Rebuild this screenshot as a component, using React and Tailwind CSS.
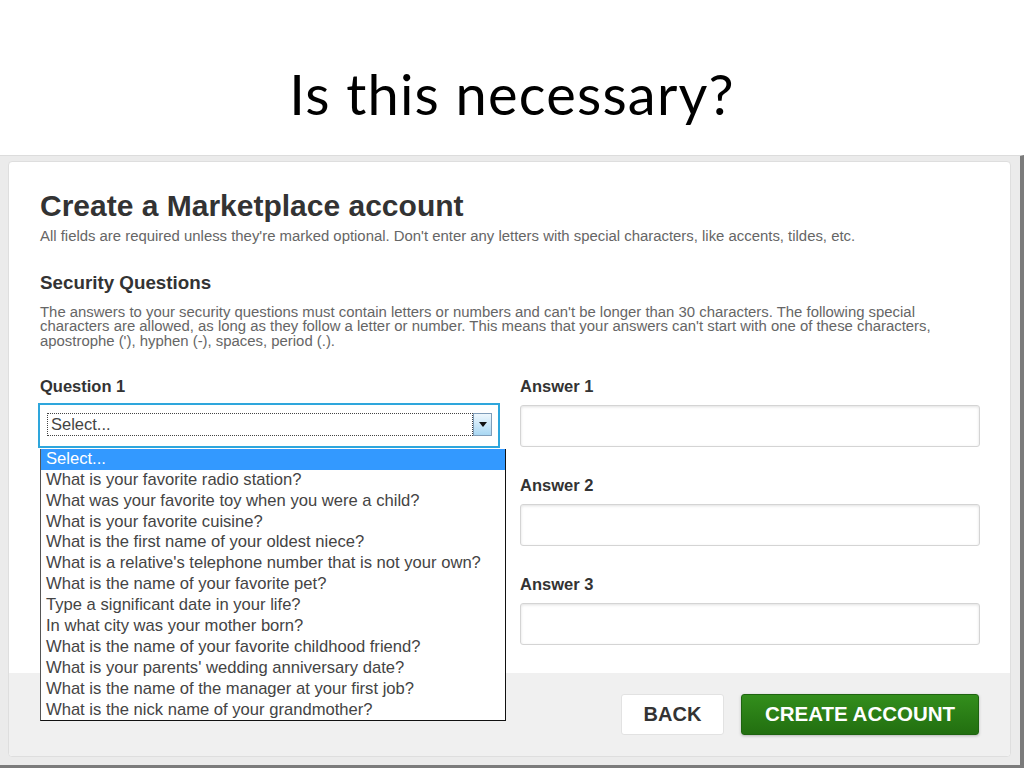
import React from "react";

const questions = [
  "Select...",
  "What is your favorite radio station?",
  "What was your favorite toy when you were a child?",
  "What is your favorite cuisine?",
  "What is the first name of your oldest niece?",
  "What is a relative's telephone number that is not your own?",
  "What is the name of your favorite pet?",
  "Type a significant date in your life?",
  "In what city was your mother born?",
  "What is the name of your favorite childhood friend?",
  "What is your parents' wedding anniversary date?",
  "What is the name of the manager at your first job?",
  "What is the nick name of your grandmother?",
];

function Label({ children }) {
  return (
    <div className="h-[20px] leading-[20px] text-[16.5px] font-bold text-[#333] mb-[9px]">
      {children}
    </div>
  );
}

function TextInput() {
  return (
    <div className="h-[42px] bg-white border border-[#d4d4d4] rounded-[3px] shadow-[inset_0_1px_3px_rgba(0,0,0,0.12)]" />
  );
}

function HiddenField() {
  return (
    <div className="mt-[28px]">
      <div className="h-[20px] mb-[9px]" />
      <div className="h-[42px] bg-white border border-[#d4d4d4] rounded-[3px]" />
    </div>
  );
}

function OpenSelect() {
  return (
    <div className="relative -mt-[2px]">
      <div className="-ml-[2px] w-[462px] h-[45px] border-2 border-[#2ea6dc] bg-white flex pl-[7px] pr-[6px] pt-[8px]">
        <div className="flex-1 h-[23px] border border-dotted border-[#444] flex items-center pl-[3px] text-[16.5px] text-[#444]">
          Select...
        </div>
        <div className="w-[19px] h-[23px] border border-[#7f9db9] bg-gradient-to-b from-[#eef7fd] to-[#a9d8f3] flex items-center justify-center">
          <svg width="8" height="5" viewBox="0 0 8 5">
            <path d="M0 0 L8 0 L4 5 Z" fill="#111" />
          </svg>
        </div>
      </div>
      <div className="absolute left-0 top-[46px] w-[466px] bg-white border border-t-0 border-l-[#555] border-r-[#111] border-b-[#111] z-10">
        {questions.map((q, i) => (
          <div
            key={q}
            className={
              i === 0
                ? "h-[20.9px] leading-[20.9px] pl-[5px] text-[16.6px] whitespace-nowrap bg-[#3399ff] text-white"
                : "h-[20.9px] leading-[20.9px] pl-[5px] text-[16.6px] whitespace-nowrap text-[#444]"
            }
          >
            {q}
          </div>
        ))}
      </div>
    </div>
  );
}

export default function App() {
  return (
    <div className="w-[1024px] h-[768px] bg-white overflow-hidden flex flex-col">
      <div
        className="h-[155px] shrink-0 pt-[61px] text-center text-[56px] leading-[66px] tracking-[1.2px] text-black"
        style={{ fontFamily: "Lato, 'Open Sans', sans-serif" }}
      >
        Is this necessary?
      </div>
      <div
        className="flex-1 bg-[#ebebeb] border-t border-[#dcdcdc] border-r-[4px] border-r-[#7b7b7b] border-b-[3px] border-b-[#7b7b7b] pt-[5px] pl-[8px] pr-[9px] pb-[8px] flex"
        style={{ fontFamily: "'Liberation Sans', Arial, sans-serif" }}
      >
        <div className="flex-1 bg-white border border-[#dedede] rounded-[4px] overflow-visible flex flex-col">
          <div className="pl-[31px] pr-[30px] pt-[29px] pb-[27px]">
            <div className="text-[30px] leading-[30px] font-bold text-[#333] whitespace-nowrap">
              Create a Marketplace account
            </div>
            <div className="mt-[7px] text-[14.9px] leading-[17px] text-[#666] whitespace-nowrap">
              All fields are required unless they're marked optional. Don't enter any letters with special characters, like accents, tildes, etc.
            </div>
            <div className="mt-[27px] text-[18.8px] leading-[22px] font-bold text-[#333]">
              Security Questions
            </div>
            <div className="mt-[11px] text-[14.9px] leading-[14.3px] text-[#666] whitespace-nowrap">
              The answers to your security questions must contain letters or numbers and can't be longer than 30 characters. The following special
              <br />
              characters are allowed, as long as they follow a letter or number. This means that your answers can't start with one of these characters,
              <br />
              apostrophe ('), hyphen (-), spaces, period (.).
            </div>
            <div className="mt-[28px] grid grid-cols-2 gap-x-[20px] w-[940px]">
              <div className="flex flex-col">
                <Label>Question 1</Label>
                <OpenSelect />
                <HiddenField />
                <HiddenField />
              </div>
              <div className="flex flex-col">
                <Label>Answer 1</Label>
                <TextInput />
                <div className="mt-[28px]">
                  <Label>Answer 2</Label>
                  <TextInput />
                </div>
                <div className="mt-[28px]">
                  <Label>Answer 3</Label>
                  <TextInput />
                </div>
              </div>
            </div>
          </div>
          <div className="flex-1 bg-[#f0f0f0] rounded-b-[4px] flex justify-end items-start pt-[21px] pr-[31px] gap-[17px]">
            <button className="w-[103px] h-[41px] bg-white border border-[#e2e2e2] rounded-[3px] text-[20px] font-bold text-[#333]">
              BACK
            </button>
            <button className="w-[238px] h-[41px] bg-gradient-to-b from-[#338e1c] to-[#226f10] border border-[#1e6410] rounded-[3px] shadow-[0_1px_3px_rgba(0,0,0,0.25)] text-[20.5px] font-bold text-white">
              CREATE ACCOUNT
            </button>
          </div>
        </div>
      </div>
    </div>
  );
}
